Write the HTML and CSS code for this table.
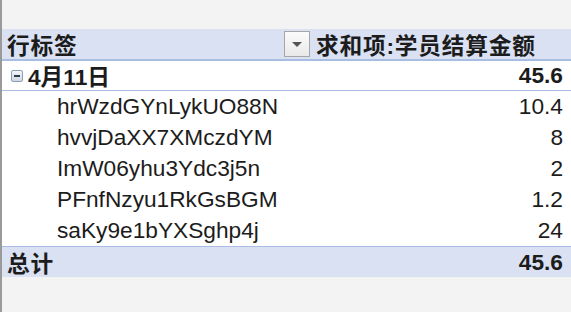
FILE: index.html
```html
<!DOCTYPE html>
<html>
<head>
    <meta charset="utf-8">
    <link rel="stylesheet" href="styles.css">
</head>
<body>
    <div class="sheet">
        <div class="pivot">
            <div class="row head">
                <div class="cell label">
                    <span class="cjk">行标签</span>
                    <span class="filter"><span class="arrow"></span></span>
                </div>
                <div class="cell caption cjk">求和项:学员结算金额</div>
            </div>
            <div class="row group">
                <div class="cell label">
                    <span class="toggle"></span>
                    <span>4月11日</span>
                </div>
                <div class="cell num">45.6</div>
            </div>
            <div class="row item">
                <div class="cell label">hrWzdGYnLykUO88N</div>
                <div class="cell num">10.4</div>
            </div>
            <div class="row item">
                <div class="cell label">hvvjDaXX7XMczdYM</div>
                <div class="cell num">8</div>
            </div>
            <div class="row item">
                <div class="cell label">ImW06yhu3Ydc3j5n</div>
                <div class="cell num">2</div>
            </div>
            <div class="row item">
                <div class="cell label">PFnfNzyu1RkGsBGM</div>
                <div class="cell num">1.2</div>
            </div>
            <div class="row item">
                <div class="cell label">saKy9e1bYXSghp4j</div>
                <div class="cell num">24</div>
            </div>
            <div class="row total">
                <div class="cell label cjk">总计</div>
                <div class="cell num">45.6</div>
            </div>
        </div>
    </div>
</body>
</html>
```

FILE: styles.css
```css
html, body {
    margin: 0;
    height: 100%;
}

body {
    background-color: #f3f3f3;
    color: #1c1c1c;
    font-family: "Liberation Sans", "Noto Sans CJK SC", sans-serif;
    font-size: 22.7px;
    overflow: hidden;
}

.sheet {
    height: 100%;
    border-left: 2px solid #9a9a9a;
    padding-top: 29px;
    box-sizing: border-box;
}

.pivot {
    display: grid;
    grid-template-columns: 308px 1fr;
}

.row {
    display: contents;
}

.cell {
    display: flex;
    align-items: center;
    white-space: nowrap;
}

.cjk {
    letter-spacing: 0.8px;
}

.row.head .cell {
    height: 30px;
    background-color: #d9e1f2;
    border-bottom: 2px solid #a9bde3;
    font-weight: bold;
}

.row.head .label {
    justify-content: space-between;
    padding-left: 5px;
    padding-right: 0;
}

.row.head .caption {
    padding-left: 6px;
}

.filter {
    width: 24px;
    height: 24px;
    border: 1px solid #a6a6a6;
    background: linear-gradient(#fbfbfb, #e9e9e9);
    display: flex;
    align-items: center;
    justify-content: center;
}

.arrow {
    width: 0;
    height: 0;
    border-left: 5px solid transparent;
    border-right: 5px solid transparent;
    border-top: 5px solid #555;
}

.row.group .cell {
    height: 29px;
    background-color: #fff;
    border-bottom: 1px solid #a9bde3;
    font-weight: bold;
}

.row.group .label {
    padding-left: 9px;
    gap: 5px;
}

.toggle {
    position: relative;
    width: 10px;
    height: 10px;
    border: 1px solid #8d9fb8;
    border-radius: 2px;
    background: linear-gradient(#f4f6f9, #cfd6e0);
}

.toggle:before {
    content: "";
    position: absolute;
    left: 2px;
    right: 2px;
    top: 4px;
    height: 2px;
    background-color: #2d3b4f;
}

.row.item .cell {
    height: 31px;
    background-color: #fff;
}

.row.item .label {
    padding-left: 55px;
}

.row.total .cell {
    height: 30px;
    background-color: #d9e1f2;
    border-top: 1px solid #a9bde3;
    font-weight: bold;
}

.row.total .label {
    padding-left: 5px;
}

.num {
    justify-content: flex-end;
    padding-right: 8px;
}
```
